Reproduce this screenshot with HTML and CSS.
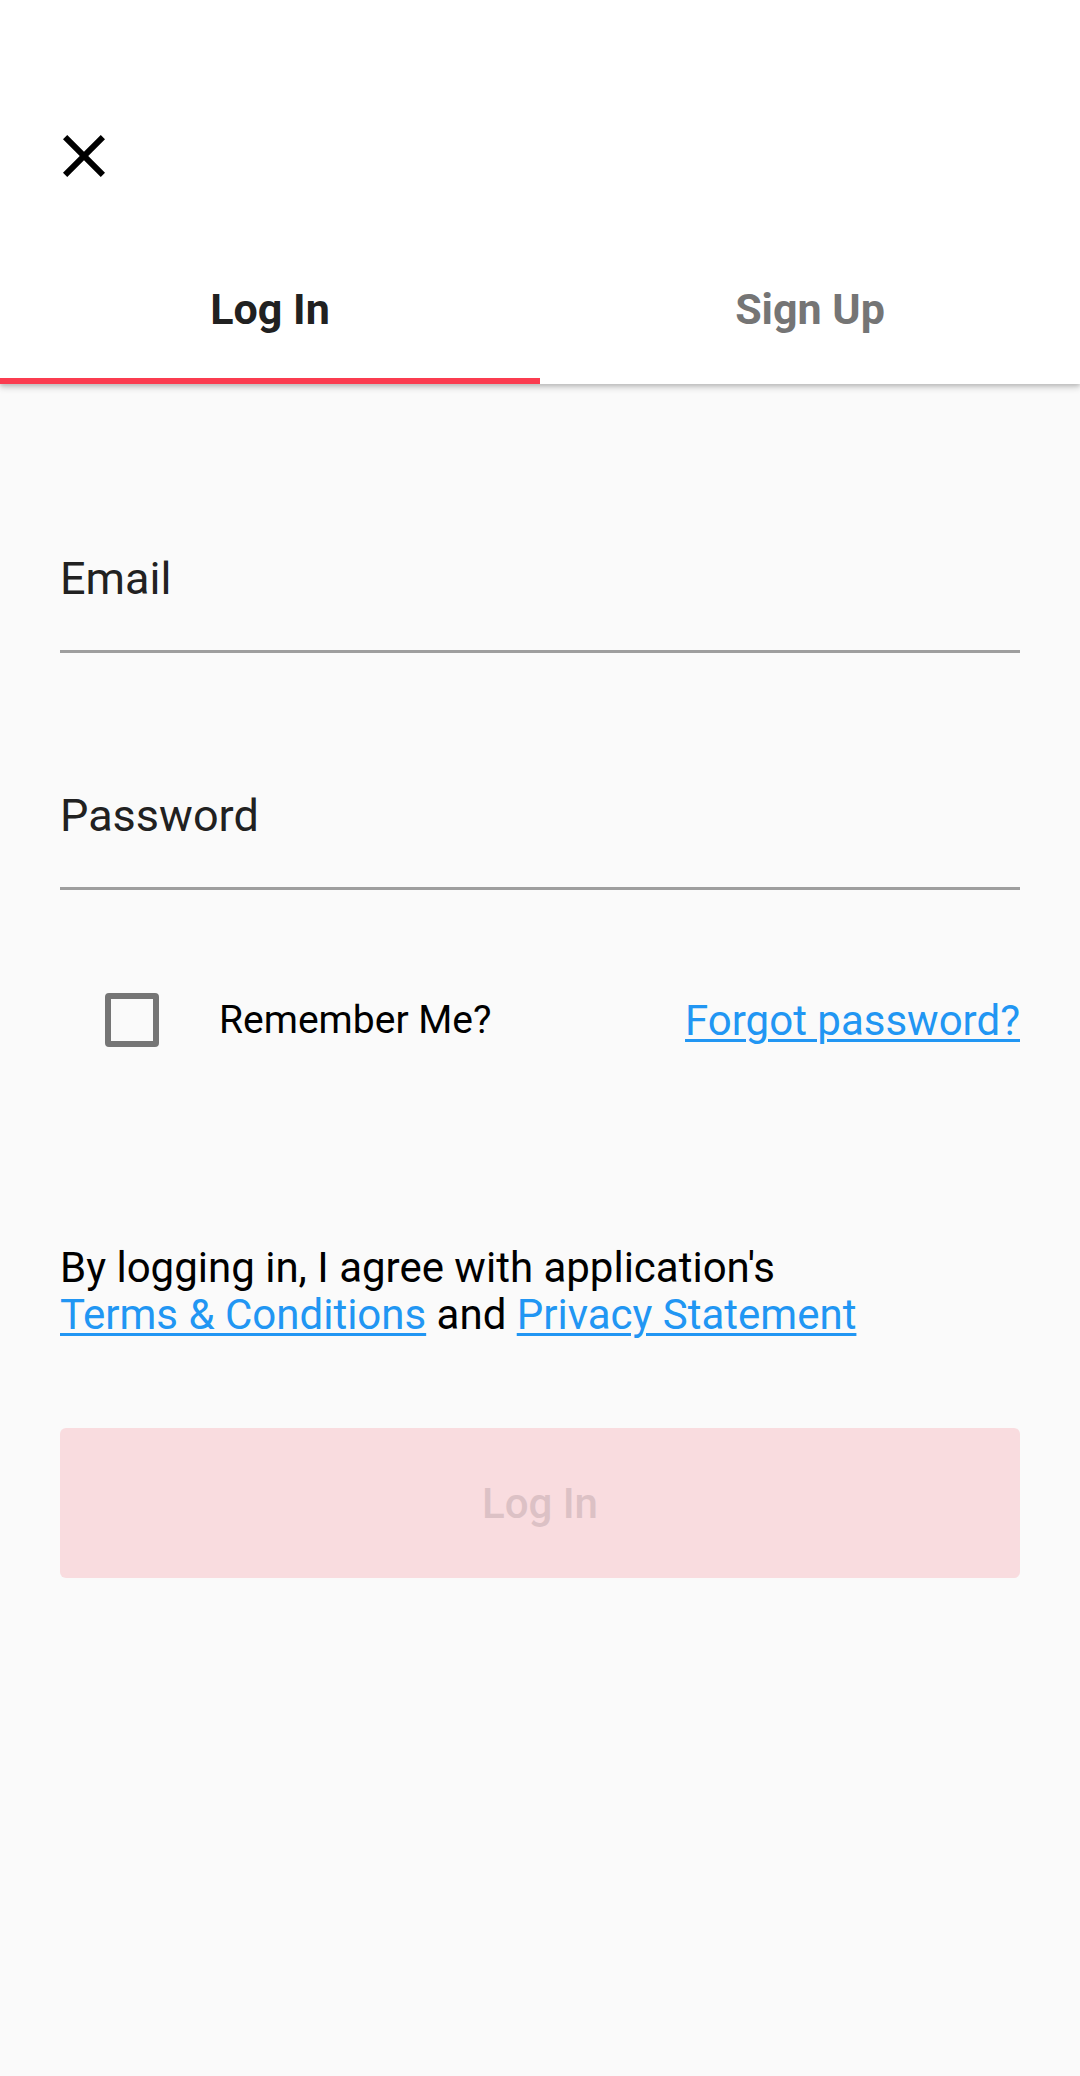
FILE: index.html
```html
<!DOCTYPE html>
<html lang="en">
<head>
<meta charset="utf-8">
<title>Log In</title>
<link rel="stylesheet" href="styles.css">
</head>
<body>
<div class="app">
  <header class="appbar">
    <div class="statusbar"></div>
    <div class="toolbar">
      <button class="icon-btn" aria-label="Close">
        <svg class="close-icon" viewBox="0 0 24 24" width="72" height="72"><path d="M19 6.41L17.59 5 12 10.59 6.41 5 5 6.41 10.59 12 5 17.59 6.41 19 12 13.41 17.59 19 19 17.59 13.41 12z" fill="#000"/></svg>
      </button>
    </div>
    <nav class="tabs">
      <div class="tab tab-active">Log In</div>
      <div class="tab">Sign Up</div>
    </nav>
  </header>
  <main class="content">
    <div class="field field-email"><span class="field-label">Email</span></div>
    <div class="field field-password"><span class="field-label">Password</span></div>
    <div class="options-row">
      <span class="checkbox"></span>
      <span class="remember">Remember Me?</span>
      <a class="link forgot" href="#">Forgot password?</a>
    </div>
    <p class="terms">By logging in, I agree with application's<br><a class="link" href="#">Terms &amp; Conditions</a> and <a class="link" href="#">Privacy Statement</a></p>
    <button class="login-btn">Log In</button>
  </main>
</div>
</body>
</html>
```
FILE: styles.css
```css
html, body {
  margin: 0;
  padding: 0;
}
body {
  background: #fafafa;
  font-family: Roboto, "Liberation Sans", Arial, sans-serif;
  width: 1080px;
  height: 2076px;
  overflow: hidden;
}
.app {
  display: flex;
  flex-direction: column;
  min-height: 2076px;
}
.appbar {
  background: #fff;
  box-shadow: 0 4px 6px rgba(0,0,0,0.16), 0 2px 3px rgba(0,0,0,0.10);
  position: relative;
  z-index: 1;
}
.statusbar {
  height: 72px;
}
.toolbar {
  height: 168px;
  display: flex;
  align-items: center;
  padding-left: 12px;
}
.icon-btn {
  width: 144px;
  height: 144px;
  border: none;
  background: none;
  padding: 0;
  display: flex;
  align-items: center;
  justify-content: center;
}
.close-icon {
  display: block;
}
.tabs {
  display: flex;
  height: 144px;
}
.tab {
  flex: 1;
  display: flex;
  align-items: center;
  justify-content: center;
  font-size: 43px;
  font-weight: 700;
  color: #757575;
  box-sizing: border-box;
  border-bottom: 6px solid transparent;
}
.tab-active {
  color: #212121;
  border-bottom-color: #fb3c50;
}
.content {
  padding: 0 60px;
  display: flex;
  flex-direction: column;
}
.field {
  border-bottom: 3px solid #9e9e9e;
  padding-bottom: 43px;
}
.field-email {
  margin-top: 167px;
}
.field-password {
  margin-top: 135px;
}
.field-label {
  display: block;
  font-size: 45px;
  line-height: 56px;
  color: #212121;
}
.options-row {
  margin-top: 58px;
  height: 144px;
  display: flex;
  align-items: center;
}
.checkbox {
  width: 54px;
  height: 54px;
  box-sizing: border-box;
  border: 6px solid #757575;
  border-radius: 4px;
  margin-left: 45px;
  flex: none;
}
.remember {
  margin-left: 60px;
  font-size: 39px;
  color: #000;
}
.link {
  color: #2196f3;
  text-decoration: underline;
  text-decoration-thickness: 3px;
  text-underline-offset: 4px;
}
.forgot {
  margin-left: auto;
  font-size: 42px;
}
.terms {
  margin: 152px 0 0;
  font-size: 42px;
  line-height: 47px;
  color: #000;
}
.login-btn {
  margin-top: 90px;
  height: 150px;
  border: none;
  border-radius: 6px;
  background: #f9dcdf;
  color: #dcc1c5;
  font-family: Roboto, "Liberation Sans", Arial, sans-serif;
  font-size: 42px;
  font-weight: 500;
  padding: 0;
}
```
